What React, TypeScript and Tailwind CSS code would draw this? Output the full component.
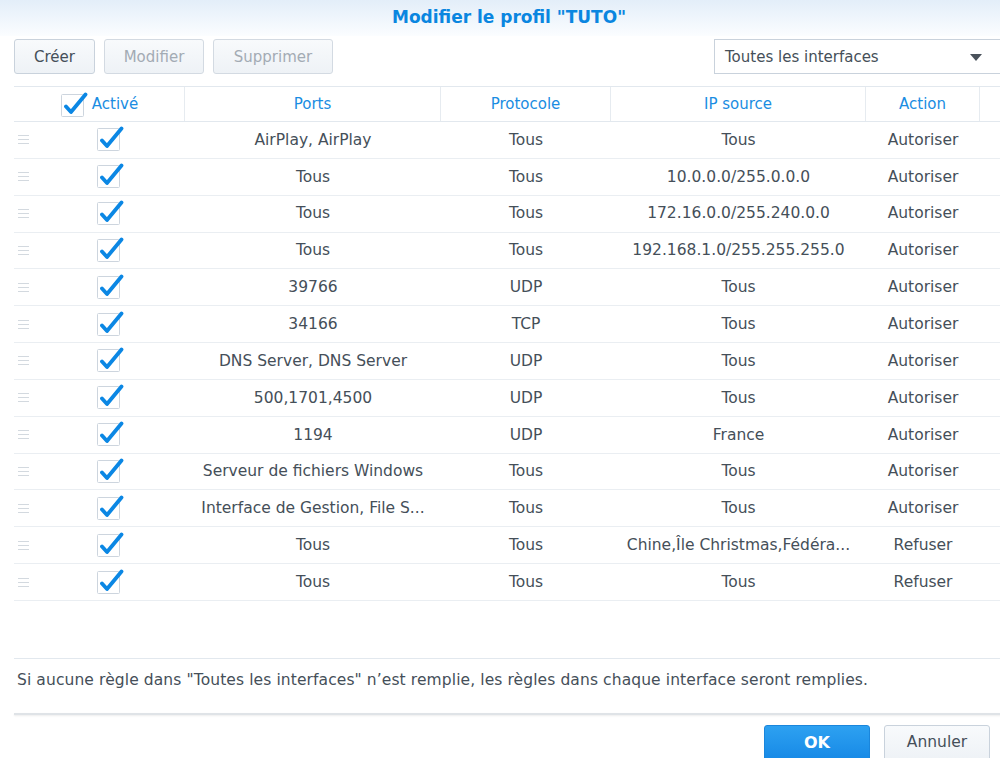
import React from "react";

type Rule = {
  ports: string;
  proto: string;
  ip: string;
  action: string;
};

const rules: Rule[] = [
  { ports: "AirPlay, AirPlay", proto: "Tous", ip: "Tous", action: "Autoriser" },
  { ports: "Tous", proto: "Tous", ip: "10.0.0.0/255.0.0.0", action: "Autoriser" },
  { ports: "Tous", proto: "Tous", ip: "172.16.0.0/255.240.0.0", action: "Autoriser" },
  { ports: "Tous", proto: "Tous", ip: "192.168.1.0/255.255.255.0", action: "Autoriser" },
  { ports: "39766", proto: "UDP", ip: "Tous", action: "Autoriser" },
  { ports: "34166", proto: "TCP", ip: "Tous", action: "Autoriser" },
  { ports: "DNS Server, DNS Server", proto: "UDP", ip: "Tous", action: "Autoriser" },
  { ports: "500,1701,4500", proto: "UDP", ip: "Tous", action: "Autoriser" },
  { ports: "1194", proto: "UDP", ip: "France", action: "Autoriser" },
  { ports: "Serveur de fichiers Windows", proto: "Tous", ip: "Tous", action: "Autoriser" },
  { ports: "Interface de Gestion, File S...", proto: "Tous", ip: "Tous", action: "Autoriser" },
  { ports: "Tous", proto: "Tous", ip: "Chine,Île Christmas,Fédéra...", action: "Refuser" },
  { ports: "Tous", proto: "Tous", ip: "Tous", action: "Refuser" },
];

// checked box with the tick going past the top right corner
function CheckBox() {
  return (
    <svg width="28" height="28" viewBox="0 0 28 28" className="shrink-0">
      <rect x="1.5" y="4.5" width="22" height="22" rx="1" fill="#fff" stroke="#cdd5de" />
      <path
        d="M6 16.5 L11 22 L25.5 4.5"
        fill="none"
        stroke="#0b87e4"
        strokeWidth="3.8"
        strokeLinecap="round"
        strokeLinejoin="round"
      />
    </svg>
  );
}

function Handle() {
  return (
    <div className="flex flex-col gap-[3px] w-[11px]">
      <div className="h-px bg-[#d3d9df]" />
      <div className="h-px bg-[#d3d9df]" />
      <div className="h-px bg-[#d3d9df]" />
    </div>
  );
}

export default function App() {
  return (
    <div
      className="w-[1000px] h-[758px] overflow-hidden bg-white text-[#454f59]"
      style={{ fontFamily: '"DejaVu Sans", Verdana, sans-serif' }}
    >
      <div className="h-[36px] pl-[18px] bg-gradient-to-b from-[#e3eef9] to-[#fbfdff] flex items-center justify-center">
        <span className="text-[17px] font-bold text-[#0a86e0]">Modifier le profil "TUTO"</span>
      </div>

      <div className="w-[1020px] pl-[14px]">
        {/* toolbar */}
        <div className="mt-[3px] flex items-center gap-[9px] h-[35px] text-[15px]">
          <button className="h-[35px] w-[81px] pt-[2px] rounded-[3px] border border-[#c9d2dc] bg-gradient-to-b from-[#f8fafc] to-[#eef2f6] text-[#454f59]">
            Créer
          </button>
          <button className="h-[35px] w-[100px] pt-[2px] rounded-[3px] border border-[#d3dae2] bg-gradient-to-b from-[#f8fafc] to-[#eef2f6] text-[#a3abb4]">
            Modifier
          </button>
          <button className="h-[35px] w-[120px] pt-[2px] rounded-[3px] border border-[#d3dae2] bg-gradient-to-b from-[#f8fafc] to-[#eef2f6] text-[#a3abb4]">
            Supprimer
          </button>
          <div className="ml-auto mr-[6px] h-[35px] w-[300px] pt-[2px] border border-[#c9d2dc] bg-white flex items-center pl-[10px] pr-[31px]">
            <span className="text-[#454f59]">Toutes les interfaces</span>
            <div className="ml-auto w-0 h-0 border-l-[6px] border-r-[6px] border-t-[7px] border-l-transparent border-r-transparent border-t-[#4a525b]" />
          </div>
        </div>

        {/* table header */}
        <div className="mt-[12px] flex h-[36px] border-y border-[#e2e8ee] text-[15px] text-[#1a8de2]">
          <div className="w-[171px] flex items-center justify-center gap-[4px] border-r border-[#e6ebf0]">
            <CheckBox />
            <span>Activé</span>
          </div>
          <div className="w-[256px] flex items-center justify-center border-r border-[#e6ebf0]">Ports</div>
          <div className="w-[170px] flex items-center justify-center border-r border-[#e6ebf0]">Protocole</div>
          <div className="w-[255px] flex items-center justify-center border-r border-[#e6ebf0]">IP source</div>
          <div className="w-[114px] flex items-center justify-center border-r border-[#e6ebf0]">Action</div>
          <div className="flex-1" />
        </div>

        {/* rows */}
        {rules.map((r, i) => (
          <div key={i} className="flex h-[36.85px] border-b border-[#eaeef2] text-[15.5px] whitespace-nowrap">
            <div className="w-[171px] flex items-center">
              <div className="w-[20px] pl-[4px]">
                <Handle />
              </div>
              <div className="flex-1 flex justify-center pb-[3px]">
                <CheckBox />
              </div>
            </div>
            <div className="w-[256px] flex items-center justify-center pt-[1px]">{r.ports}</div>
            <div className="w-[170px] flex items-center justify-center pt-[1px]">{r.proto}</div>
            <div className="w-[255px] flex items-center justify-center pt-[1px]">{r.ip}</div>
            <div className="w-[114px] flex items-center justify-center pt-[1px]">{r.action}</div>
            <div className="flex-1" />
          </div>
        ))}

        <div className="h-[57px]" />

        <div className="h-[55px] border-t border-[#e2e8ee] pl-[3px] pt-[10px] text-[15.5px] tracking-[0.1px]">
          Si aucune règle dans "Toutes les interfaces" n’est remplie, les règles dans chaque interface seront remplies.
        </div>

        <div className="h-[2px] bg-[#dfe3e7] shadow-[0_1px_2px_rgba(0,0,0,0.08)]" />

        {/* footer */}
        <div className="w-[986px] flex justify-end gap-[14px] pt-[10px] pr-[10px]">
          <button className="h-[36px] w-[106px] rounded-[3px] border border-[#1a86dc] bg-gradient-to-b from-[#2da1f1] to-[#1689e6] text-[16px] font-bold text-white">
            OK
          </button>
          <button className="h-[36px] w-[106px] rounded-[3px] border border-[#c9d2dc] bg-gradient-to-b from-[#f8fafc] to-[#eef2f6] text-[15.5px] text-[#454f59]">
            Annuler
          </button>
        </div>
      </div>
    </div>
  );
}
